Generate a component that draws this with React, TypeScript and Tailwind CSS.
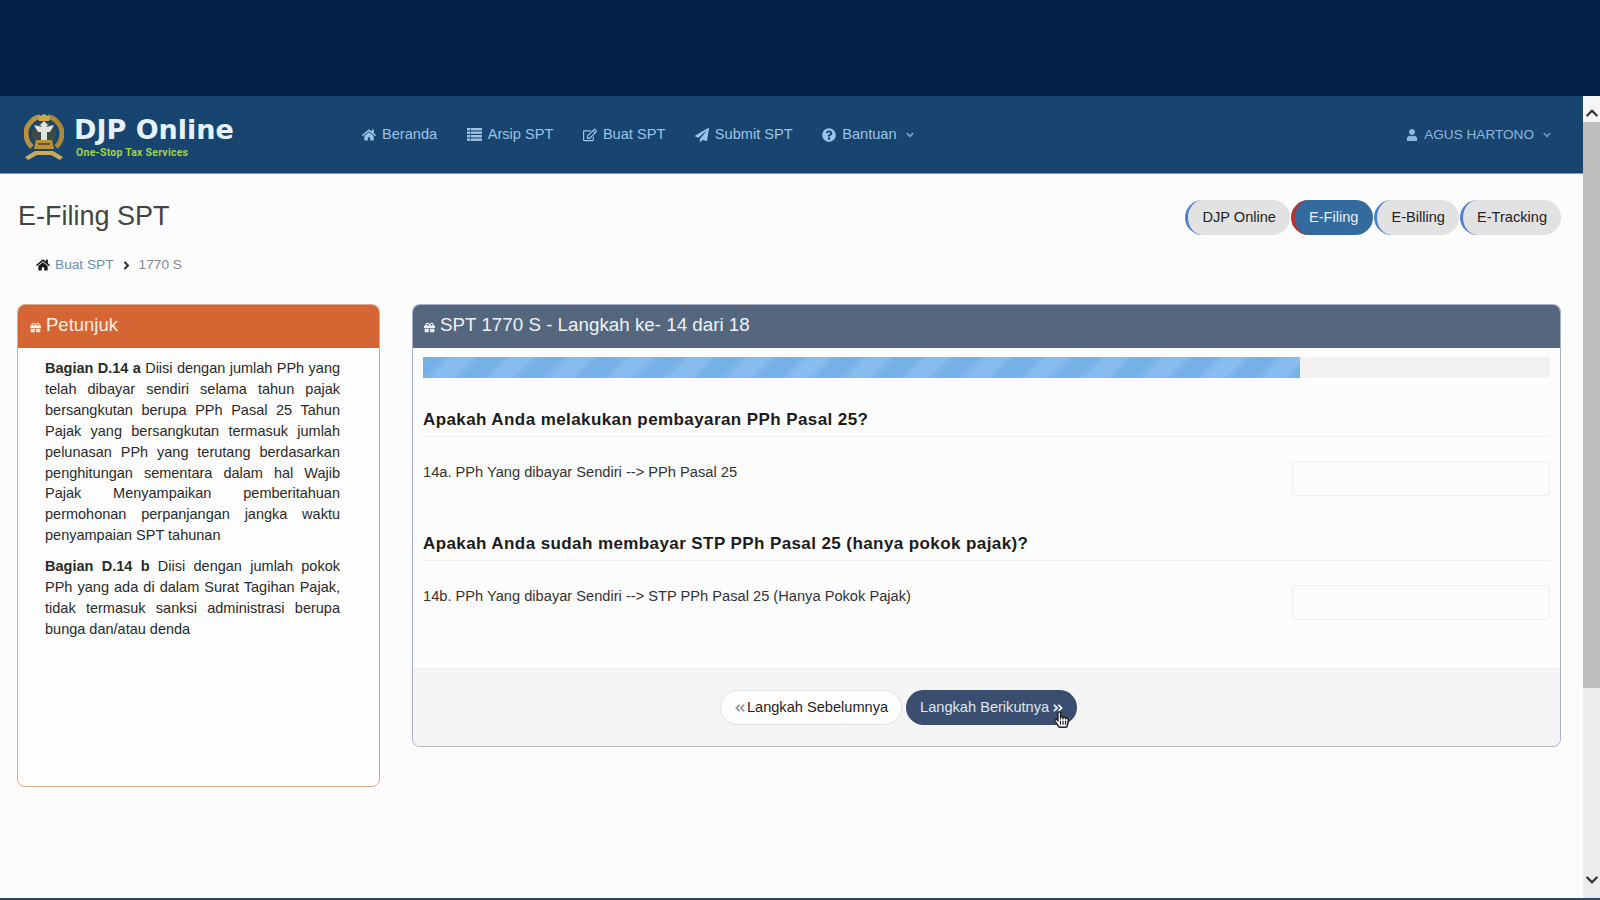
import { FaHome, FaRegEdit, FaPaperPlane, FaQuestionCircle, FaUser, FaGift, FaAngleDown, FaAngleRight, FaAngleDoubleLeft, FaAngleDoubleRight, FaRegHandPointer, FaHandPointer, FaChevronUp, FaChevronDown } from "react-icons/fa";

function Emblem() {
  return (
    <svg width="40" height="47" viewBox="0 0 40 47" className="shrink-0">
      <path d="M8 33 C1 27 0 15 6 9 C9 5 13 3 16 3" fill="none" stroke="#b8923f" strokeWidth="5" />
      <path d="M32 33 C39 27 40 15 34 9 C31 5 27 3 24 3" fill="none" stroke="#a8863a" strokeWidth="5" />
      <path d="M14 3 L20 0 L26 3 L25 7 L15 7 Z" fill="#d0a94c" />
      <circle cx="20" cy="20" r="12" fill="#3e4a45" />
      <path d="M20 7 L24 11 L22 13 L30 11 L26 18 L23 18 L23 26 L17 26 L17 18 L14 18 L10 11 L18 13 L16 11 Z" fill="#dfe3dd" />
      <path d="M12 26 H28 L30 35 H10 Z" fill="#bb913a" />
      <rect x="14" y="29" width="12" height="2" fill="#6c5423" />
      <path d="M1 43 L11 37 H29 L39 43 L36 46 L27 41 H13 L4 46 Z" fill="#c9a95f" />
    </svg>
  );
}

function ListIcon() {
  return (
    <svg width="15" height="13" viewBox="0 0 15 13" fill="currentColor">
      <rect x="0" y="0" width="3" height="2.4" />
      <rect x="3.6" y="0" width="11.4" height="2.4" />
      <rect x="0" y="3.5" width="3" height="2.4" />
      <rect x="3.6" y="3.5" width="11.4" height="2.4" />
      <rect x="0" y="7" width="3" height="2.4" />
      <rect x="3.6" y="7" width="11.4" height="2.4" />
      <rect x="0" y="10.5" width="3" height="2.4" />
      <rect x="3.6" y="10.5" width="11.4" height="2.4" />
    </svg>
  );
}

function NavItem({ icon, label, caret }: { icon: React.ReactNode; label: string; caret?: boolean }) {
  return (
    <div className="flex items-center gap-[6px] text-[14.6px] text-[#9cc3e8]">
      <span className="text-[14px]">{icon}</span>
      <span>{label}</span>
      {caret && <FaAngleDown className="ml-[1px] text-[12px] opacity-70" />}
    </div>
  );
}

function Pill({ label, active }: { label: string; active?: boolean }) {
  return (
    <div
      className={
        active
          ? "flex h-[35px] items-center rounded-full border-l-[4px] border-l-[#b5332c] bg-[#336b9f] pl-[14px] pr-[15px] text-[14.6px] text-[#e4eff8]"
          : "flex h-[35px] items-center rounded-full border-l-[3px] border-l-[#4f7fd0] bg-[#e2e2e2] pl-[14px] pr-[14px] text-[14.6px] text-[#222222]"
      }
    >
      {label}
    </div>
  );
}

function Field({ title, label }: { title: string; label: string }) {
  return (
    <div>
      <h4 className="border-b border-[#efefef] pb-[4px] text-[17px] font-bold leading-[24px] tracking-[0.41px] text-[#1c1c1c]">{title}</h4>
      <div className="mt-[24px] flex items-start justify-between">
        <div className="pt-[1px] text-[14.65px] leading-[20px] text-[#333333]">{label}</div>
        <div className="h-[35px] w-[258px] rounded-[3px] border border-[#eeeeee] bg-[#fcfcfc]" />
      </div>
    </div>
  );
}

export default function App() {
  return (
    <div className="flex h-[900px] w-[1600px] flex-col overflow-hidden bg-[#fcfcfc] font-['Liberation_Sans',Arial,sans-serif]">
      <div className="h-[96px] shrink-0 bg-[#04214a]" />
      <div className="flex min-h-0 flex-1">
        <div className="flex min-w-0 flex-1 flex-col">
          <header className="flex h-[78px] shrink-0 items-start border-b border-[#8aa0b4] bg-[#17456f]">
            <div className="ml-[24px] mt-[18px] flex w-[338px] items-center gap-[10px]">
              <Emblem />
              <div className="-mt-[2px] flex flex-col">
                <span className="font-['DejaVu_Sans',sans-serif] text-[27px] font-bold leading-[30px] text-[#e6f2fb]">DJP Online</span>
                <span className="ml-[2px] mt-[1px] font-['Roboto',sans-serif] text-[10.5px] font-bold leading-[13px] tracking-[0.25px] text-[#9fd24a]">One-Stop Tax Services</span>
              </div>
            </div>
            <nav className="mt-[28px] flex items-center gap-[29.5px]">
              <NavItem icon={<FaHome />} label="Beranda" />
              <NavItem icon={<ListIcon />} label="Arsip SPT" />
              <NavItem icon={<FaRegEdit />} label="Buat SPT" />
              <NavItem icon={<FaPaperPlane />} label="Submit SPT" />
              <NavItem icon={<FaQuestionCircle />} label="Bantuan" caret />
            </nav>
            <div className="ml-auto mr-[30px] mt-[29px] flex items-center gap-[6px] text-[13.6px] text-[#8fb6dc]">
              <FaUser className="text-[12px]" />
              <span>AGUS HARTONO</span>
              <FaAngleDown className="ml-[1px] text-[12px] opacity-70" />
            </div>
          </header>

          <main className="flex-1 px-[17px]">
            <div className="flex items-start justify-between pr-[5px] pt-[26px]">
              <h1 className="pl-[1px] text-[27px] font-normal leading-[32px] text-[#444444]">E-Filing SPT</h1>
              <div className="flex gap-[1px]">
                <Pill label="DJP Online" />
                <Pill label="E-Filing" active />
                <Pill label="E-Billing" />
                <Pill label="E-Tracking" />
              </div>
            </div>

            <div className="mt-[20px] flex items-center pl-[19px] text-[13.7px] leading-[20px]">
              <FaHome className="text-[14px] text-[#1c1c1c]" />
              <span className="ml-[5px] text-[#6a8db5]">Buat SPT</span>
              <FaAngleRight className="mx-[6px] text-[13px] text-[#333333]" />
              <span className="text-[#7d8a97]">1770 S</span>
            </div>

            <div className="mt-[29px] flex items-start gap-[32px] pr-[5px]">
              <aside className="h-[483px] w-[363px] shrink-0 overflow-hidden rounded-[8px] border border-[#d9a993] bg-[#fdfdfd]">
                <div className="flex h-[43px] items-center gap-[5px] bg-[#d56633] pb-[4px] pl-[12px] text-[#fbeee6]">
                  <FaGift className="mt-[5px] text-[11px]" />
                  <span className="text-[18.5px]">Petunjuk</span>
                </div>
                <div className="pl-[27px] pr-[39px] pt-[10px] text-justify text-[14.5px] leading-[20.9px] text-[#2a2a2a]">
                  <p><b>Bagian D.14 a</b> Diisi dengan jumlah PPh yang telah dibayar sendiri selama tahun pajak bersangkutan berupa PPh Pasal 25 Tahun Pajak yang bersangkutan termasuk jumlah pelunasan PPh yang terutang berdasarkan penghitungan sementara dalam hal Wajib Pajak Menyampaikan pemberitahuan permohonan perpanjangan jangka waktu penyampaian SPT tahunan</p>
                  <p className="mt-[10px]"><b>Bagian D.14 b</b> Diisi dengan jumlah pokok PPh yang ada di dalam Surat Tagihan Pajak, tidak termasuk sanksi administrasi berupa bunga dan/atau denda</p>
                </div>
              </aside>

              <section className="h-[443px] min-w-0 flex-1 overflow-hidden rounded-[8px] border border-[#a9afc9] border-b-[#b5b5b5] bg-[#fcfcfc]">
                <div className="flex h-[43px] items-center gap-[5px] bg-[#54677f] pb-[3px] pl-[11px] text-[#eef2f6]">
                  <FaGift className="mt-[4px] text-[11px]" />
                  <span className="text-[18.8px]">SPT 1770 S - Langkah ke- 14 dari 18</span>
                </div>
                <div className="h-[320px] px-[10px] pt-[9px]">
                  <div className="h-[21px] w-full bg-[#f2f2f2]">
                    <div className="h-full w-[877px] bg-[#78b2e8] bg-[repeating-linear-gradient(135deg,#76b0e7_0px,#76b0e7_14px,#88bcec_22px,#88bcec_34px,#76b0e7_42px)]" />
                  </div>
                  <div className="mt-[30px]">
                    <Field title="Apakah Anda melakukan pembayaran PPh Pasal 25?" label="14a. PPh Yang dibayar Sendiri --> PPh Pasal 25" />
                  </div>
                  <div className="mt-[36px]">
                    <Field title="Apakah Anda sudah membayar STP PPh Pasal 25 (hanya pokok pajak)?" label="14b. PPh Yang dibayar Sendiri --> STP PPh Pasal 25 (Hanya Pokok Pajak)" />
                  </div>
                </div>
                <div className="flex h-[78px] items-start justify-center gap-[4px] border-t border-[#eeeeee] bg-[#f5f5f5] pr-[176px] pt-[21px]">
                  <div className="flex h-[35px] items-center gap-[1px] rounded-full border border-[#e2e2e2] bg-[#fdfdfd] px-[13px] text-[14.6px] text-[#1f1f1f]">
                    <FaAngleDoubleLeft className="text-[12px] text-[#9a9a9a]" />
                    <span>Langkah Sebelumnya</span>
                  </div>
                  <div className="relative flex h-[35px] items-center gap-[3px] rounded-full bg-[#3a4f70] pl-[14px] pr-[13px] text-[14.6px] text-[#dfe6ee]">
                    <span>Langkah Berikutnya</span>
                    <FaAngleDoubleRight className="text-[12px]" />
                    <FaHandPointer className="absolute left-[147px] top-[21px] text-[17px] text-white" />
                    <FaRegHandPointer className="absolute left-[147px] top-[21px] text-[17px] text-[#222222]" />
                  </div>
                </div>
              </section>
            </div>
          </main>
        </div>

        <div className="flex w-[17px] shrink-0 flex-col bg-[#ececec]">
          <div className="flex h-[26px] items-center justify-center bg-[#f6f6f6] pt-[8px]">
            <FaChevronUp className="text-[14px] text-[#333333]" />
          </div>
          <div className="h-[566px] bg-[#bdbdbd]" />
          <div className="flex-1" />
          <div className="flex h-[36px] items-center justify-center">
            <FaChevronDown className="text-[14px] text-[#333333]" />
          </div>
        </div>
      </div>
      <div className="h-[2px] shrink-0 bg-[#2a4a68]" />
    </div>
  );
}
